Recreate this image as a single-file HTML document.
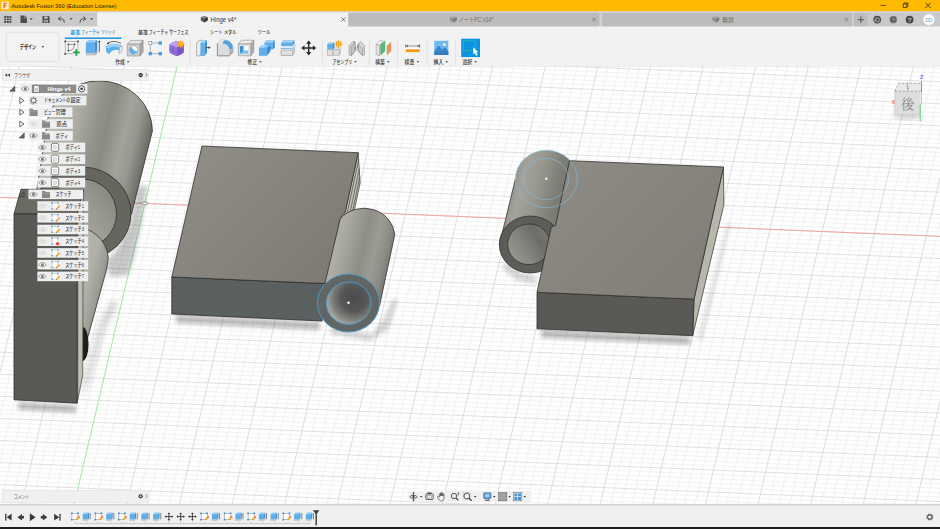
<!DOCTYPE html>
<html lang="ja"><head><meta charset="utf-8"><title>Autodesk Fusion 360 (Education License)</title>
<style>
html,body{margin:0;padding:0;background:#fff;overflow:hidden}
svg{display:block;font-family:"Liberation Sans","Noto Sans CJK JP",sans-serif}
text{font-family:"Liberation Sans","Noto Sans CJK JP",sans-serif}
</style></head><body>
<svg width="940" height="529" viewBox="0 0 940 529">
<defs>
<filter id="blur3" x="-20%" y="-20%" width="140%" height="140%"><feGaussianBlur stdDeviation="3"/></filter>
<filter id="blur2" x="-20%" y="-20%" width="140%" height="140%"><feGaussianBlur stdDeviation="2"/></filter>
<filter id="blur1" x="-20%" y="-20%" width="140%" height="140%"><feGaussianBlur stdDeviation="0.6"/></filter>
<clipPath id="canvasclip"><rect x="0" y="66" width="940" height="438"/></clipPath>
</defs>
<rect x="0" y="0" width="940" height="529" fill="#ffffff"/>
<g id="canvas" clip-path="url(#canvasclip)">
<path d="M-21.2 60L-127.0 510M-10.7 60L-116.5 510M-0.2 60L-105.9 510M10.3 60L-95.4 510M31.4 60L-74.4 510M41.9 60L-63.9 510M52.4 60L-53.3 510M62.9 60L-42.8 510M84.0 60L-21.8 510M94.5 60L-11.3 510M105.0 60L-0.7 510M115.5 60L9.8 510M136.6 60L30.8 510M147.1 60L41.3 510M157.6 60L51.9 510M168.1 60L62.4 510M189.2 60L83.4 510M199.7 60L93.9 510M210.2 60L104.5 510M220.7 60L115.0 510M241.8 60L136.0 510M252.3 60L146.5 510M262.8 60L157.1 510M273.3 60L167.6 510M294.4 60L188.6 510M304.9 60L199.1 510M315.4 60L209.7 510M325.9 60L220.2 510M347.0 60L241.2 510M357.5 60L251.7 510M368.0 60L262.3 510M378.5 60L272.8 510M399.6 60L293.8 510M410.1 60L304.3 510M420.6 60L314.9 510M431.1 60L325.4 510M452.2 60L346.4 510M462.7 60L356.9 510M473.2 60L367.5 510M483.7 60L378.0 510M504.8 60L399.0 510M515.3 60L409.5 510M525.8 60L420.1 510M536.3 60L430.6 510M557.4 60L451.6 510M567.9 60L462.1 510M578.4 60L472.7 510M588.9 60L483.2 510M610.0 60L504.2 510M620.5 60L514.7 510M631.0 60L525.3 510M641.5 60L535.8 510M662.6 60L556.8 510M673.1 60L567.3 510M683.6 60L577.9 510M694.1 60L588.4 510M715.2 60L609.4 510M725.7 60L619.9 510M736.2 60L630.5 510M746.7 60L641.0 510M767.8 60L662.0 510M778.3 60L672.5 510M788.8 60L683.1 510M799.3 60L693.6 510M820.4 60L714.6 510M830.9 60L725.1 510M841.4 60L735.7 510M851.9 60L746.2 510M873.0 60L767.2 510M883.5 60L777.7 510M894.0 60L788.3 510M904.5 60L798.8 510M925.6 60L819.8 510M936.1 60L830.3 510M946.6 60L840.9 510M957.1 60L851.4 510M978.2 60L872.4 510M988.7 60L882.9 510M999.2 60L893.5 510M1009.7 60L904.0 510M1030.8 60L925.0 510M1041.3 60L935.5 510M1051.8 60L946.1 510M1062.3 60L956.6 510M1083.4 60L977.6 510M1093.9 60L988.1 510M1104.4 60L998.7 510M1114.9 60L1009.2 510M1136.0 60L1030.2 510M1146.5 60L1040.7 510M1157.0 60L1051.3 510M1167.5 60L1061.8 510M1188.6 60L1082.8 510M1199.1 60L1093.3 510M1209.6 60L1103.9 510M1220.1 60L1114.4 510" stroke="#eaeaea" stroke-width="0.7" fill="none"/>
<path d="M-5 2.7L945 42.1M-5 7.1L945 46.5M-5 11.5L945 51.0M-5 16.0L945 55.4M-5 24.8L945 64.2M-5 29.2L945 68.6M-5 33.6L945 73.1M-5 38.1L945 77.5M-5 46.9L945 86.3M-5 51.3L945 90.7M-5 55.7L945 95.2M-5 60.2L945 99.6M-5 69.0L945 108.4M-5 73.4L945 112.8M-5 77.8L945 117.3M-5 82.3L945 121.7M-5 91.1L945 130.5M-5 95.5L945 134.9M-5 99.9L945 139.4M-5 104.4L945 143.8M-5 113.2L945 152.6M-5 117.6L945 157.0M-5 122.0L945 161.5M-5 126.5L945 165.9M-5 135.3L945 174.7M-5 139.7L945 179.1M-5 144.1L945 183.6M-5 148.6L945 188.0M-5 157.4L945 196.8M-5 161.8L945 201.2M-5 166.2L945 205.7M-5 170.7L945 210.1M-5 179.5L945 218.9M-5 183.9L945 223.3M-5 188.3L945 227.8M-5 192.8L945 232.2M-5 201.6L945 241.0M-5 206.0L945 245.4M-5 210.4L945 249.9M-5 214.9L945 254.3M-5 223.7L945 263.1M-5 228.1L945 267.5M-5 232.5L945 272.0M-5 237.0L945 276.4M-5 245.8L945 285.2M-5 250.2L945 289.6M-5 254.6L945 294.1M-5 259.1L945 298.5M-5 267.9L945 307.3M-5 272.3L945 311.7M-5 276.7L945 316.2M-5 281.2L945 320.6M-5 290.0L945 329.4M-5 294.4L945 333.8M-5 298.8L945 338.3M-5 303.3L945 342.7M-5 312.1L945 351.5M-5 316.5L945 355.9M-5 320.9L945 360.4M-5 325.4L945 364.8M-5 334.2L945 373.6M-5 338.6L945 378.0M-5 343.0L945 382.5M-5 347.5L945 386.9M-5 356.3L945 395.7M-5 360.7L945 400.1M-5 365.1L945 404.6M-5 369.6L945 409.0M-5 378.4L945 417.8M-5 382.8L945 422.2M-5 387.2L945 426.7M-5 391.7L945 431.1M-5 400.5L945 439.9M-5 404.9L945 444.3M-5 409.3L945 448.8M-5 413.8L945 453.2M-5 422.6L945 462.0M-5 427.0L945 466.4M-5 431.4L945 470.9M-5 435.9L945 475.3M-5 444.7L945 484.1M-5 449.1L945 488.5M-5 453.5L945 493.0M-5 458.0L945 497.4M-5 466.8L945 506.2M-5 471.2L945 510.6M-5 475.6L945 515.1M-5 480.1L945 519.5M-5 488.9L945 528.3M-5 493.3L945 532.7M-5 497.7L945 537.2M-5 502.2L945 541.6M-5 511.0L945 550.4M-5 515.4L945 554.8M-5 519.8L945 559.3M-5 524.3L945 563.7M-5 533.1L945 572.5M-5 537.5L945 576.9M-5 541.9L945 581.4M-5 546.4L945 585.8" stroke="#ededed" stroke-width="0.7" fill="none"/>
<path d="M-31.8 60L-137.5 510M20.8 60L-84.9 510M73.4 60L-32.3 510M126.0 60L20.3 510M178.6 60L72.9 510M231.2 60L125.5 510M283.8 60L178.1 510M336.4 60L230.7 510M389.0 60L283.3 510M441.6 60L335.9 510M494.2 60L388.5 510M546.8 60L441.1 510M599.4 60L493.7 510M652.0 60L546.3 510M704.6 60L598.9 510M757.2 60L651.5 510M809.8 60L704.1 510M862.4 60L756.7 510M915.0 60L809.3 510M967.6 60L861.9 510M1020.2 60L914.5 510M1072.8 60L967.1 510M1125.4 60L1019.7 510M1178.0 60L1072.3 510" stroke="#d4d4d4" stroke-width="0.8" fill="none"/>
<path d="M-5 -1.7L945 37.7M-5 20.4L945 59.8M-5 42.5L945 81.9M-5 64.6L945 104.0M-5 86.7L945 126.1M-5 108.8L945 148.2M-5 130.9L945 170.3M-5 153.0L945 192.4M-5 175.1L945 214.5M-5 197.2L945 236.6M-5 219.3L945 258.7M-5 241.4L945 280.8M-5 263.5L945 302.9M-5 285.6L945 325.0M-5 307.7L945 347.1M-5 329.8L945 369.2M-5 351.9L945 391.3M-5 374.0L945 413.4M-5 396.1L945 435.5M-5 418.2L945 457.6M-5 440.3L945 479.7M-5 462.4L945 501.8M-5 484.5L945 523.9M-5 506.6L945 546.0M-5 528.7L945 568.1" stroke="#d8d8d8" stroke-width="0.8" fill="none"/>
<path d="M-5 197.2L945 236.6" stroke="#f5a3a0" stroke-width="1" fill="none"/>
<path d="M178.6 60L72.9 510" stroke="#a8eca8" stroke-width="0.9" fill="none"/>
<defs>
<linearGradient id="gTopM" gradientUnits="userSpaceOnUse" x1="200" y1="150" x2="340" y2="290">
<stop offset="0" stop-color="#8f8d85"/><stop offset="0.5" stop-color="#85837b"/><stop offset="1" stop-color="#7b7972"/></linearGradient>
<linearGradient id="gTopR" gradientUnits="userSpaceOnUse" x1="560" y1="160" x2="700" y2="300">
<stop offset="0" stop-color="#8d8b83"/><stop offset="0.5" stop-color="#86847c"/><stop offset="1" stop-color="#807e76"/></linearGradient>
<linearGradient id="gCylM" gradientUnits="userSpaceOnUse" x1="328" y1="262" x2="388" y2="276">
<stop offset="0" stop-color="#b2b2aa"/><stop offset="0.22" stop-color="#a5a59d"/><stop offset="0.5" stop-color="#8e8e87"/><stop offset="0.7" stop-color="#9c9c94"/><stop offset="0.88" stop-color="#8b8b84"/><stop offset="1" stop-color="#747470"/></linearGradient>
<linearGradient id="gCylR" gradientUnits="userSpaceOnUse" x1="503" y1="205" x2="565" y2="220">
<stop offset="0" stop-color="#8c8c85"/><stop offset="0.2" stop-color="#a3a39b"/><stop offset="0.45" stop-color="#98988f"/><stop offset="0.75" stop-color="#7e7e77"/><stop offset="1" stop-color="#73736d"/></linearGradient>
<radialGradient id="gHoleM" gradientUnits="userSpaceOnUse" cx="354" cy="298" r="30">
<stop offset="0" stop-color="#4a4c4b"/><stop offset="0.45" stop-color="#565857"/><stop offset="0.72" stop-color="#7c7e7a"/><stop offset="0.9" stop-color="#a2a29c"/><stop offset="1" stop-color="#aeaea8"/></radialGradient>
<linearGradient id="gHoleR" gradientUnits="userSpaceOnUse" x1="511" y1="258" x2="548" y2="234">
<stop offset="0" stop-color="#97978f"/><stop offset="0.4" stop-color="#84847e"/><stop offset="0.75" stop-color="#6c6c68"/><stop offset="1" stop-color="#777772"/></linearGradient>
<linearGradient id="gCylL" gradientUnits="userSpaceOnUse" x1="42" y1="150" x2="141.600" y2="173.400">
<stop offset="0" stop-color="#bebeb6"/><stop offset="0.25" stop-color="#aeaea6"/><stop offset="0.45" stop-color="#94948c"/><stop offset="0.567" stop-color="#8a8a83"/><stop offset="0.66" stop-color="#979790"/><stop offset="0.745" stop-color="#a3a39b"/><stop offset="0.86" stop-color="#97978f"/><stop offset="0.95" stop-color="#7c7c76"/><stop offset="1" stop-color="#6b6b65"/></linearGradient>
<linearGradient id="gCylL2" gradientUnits="userSpaceOnUse" x1="70" y1="280" x2="106" y2="289">
<stop offset="0" stop-color="#b8b8b0"/><stop offset="0.5" stop-color="#b0b0a8"/><stop offset="0.8" stop-color="#9c9c94"/><stop offset="1" stop-color="#7c7c76"/></linearGradient>
<linearGradient id="gHoleL" gradientUnits="userSpaceOnUse" x1="60" y1="230" x2="118" y2="190">
<stop offset="0" stop-color="#b0b0a8"/><stop offset="0.5" stop-color="#9c9c94"/><stop offset="1" stop-color="#84847d"/></linearGradient>
<linearGradient id="gStrip" gradientUnits="userSpaceOnUse" x1="77" y1="0" x2="83.5" y2="0">
<stop offset="0" stop-color="#8a8a82"/><stop offset="0.4" stop-color="#c2c2b7"/><stop offset="1" stop-color="#b0b0a5"/></linearGradient>
</defs>
<!-- shadows -->
<g fill="#000">
<path d="M176 315L320 322L320 330L176 323Z" filter="url(#blur2)" opacity="0.26"/>
<path d="M330 326L372 334L384 318L392 300L398 300L388 330L370 341L330 334Z" filter="url(#blur2)" opacity="0.16"/>
<path d="M541 330L690 337L690 344.5L541 337.5Z" filter="url(#blur2)" opacity="0.28"/>
<path d="M697 338L727 222L731 224L702 342Z" filter="url(#blur2)" opacity="0.10"/>
<path d="M505 262L520 272L536 276L536 284L516 280L502 268Z" filter="url(#blur2)" opacity="0.16"/>
<path d="M18 402L76 405.500L76 413L18 409.500Z" filter="url(#blur2)" opacity="0.26"/>
<path d="M84 378L100 322L112 300L118 304L104 330L90 380L82 400Z" filter="url(#blur3)" opacity="0.16"/>
<path d="M138 186L147 186L141 225L134 257L128 275L110 277L107 262L120 245L130 222Z" filter="url(#blur2)" opacity="0.21"/>
</g>
<!-- ===== middle object ===== -->
<g stroke-linejoin="round">
<!-- right stepped side -->
<path d="M358.2 152.7L360.1 183L351.800 222L343 222Z" fill="#c0c0b6" stroke="#3a3a36" stroke-width="0.7"/>
<path d="M358.700 159.500L345.300 222M359.400 169L348 222M359.900 177L350.300 222" stroke="#4a4a45" stroke-width="0.7" fill="none"/>
<!-- front face -->
<path d="M171.8 277L326 283.600L322 321L171.8 314Z" fill="#5a6060" stroke="#2e2e2b" stroke-width="0.8"/>
<!-- top face -->
<path d="M202 146L358.2 152.7L345.4 211.3L340.3 218.5L326 283.600L171.8 277Z" fill="url(#gTopM)" stroke="#2e2e2b" stroke-width="0.8"/>
<!-- cylinder body -->
<path d="M340.3 218.5A31 29 0 0 1 394.8 234.4L379.5 306L325 283Z" fill="url(#gCylM)" stroke="#33332f" stroke-width="0.8"/>
<!-- end ring -->
<ellipse cx="348.5" cy="303" rx="31" ry="29" fill="#616564" stroke="#469dd0" stroke-width="0.9"/>
<ellipse cx="348.7" cy="303.2" rx="22.3" ry="21.2" fill="url(#gHoleM)" stroke="#469dd0" stroke-width="0.9"/>
<circle cx="348.5" cy="302.7" r="1.2" fill="#fff"/>
</g>
<!-- ===== right object ===== -->
<g stroke-linejoin="round">
<!-- cylinder body -->
<path d="M499.6 244A31 29 0 0 0 561 248L577.4 179A31 28.700 0 0 0 515.4 179Z" fill="url(#gCylR)"/><path d="M515.400 179L499.600 244" stroke="#33332f" stroke-width="0.8" fill="none"/>
<!-- end ring -->
<ellipse cx="530.3" cy="244.5" rx="31" ry="28.5" fill="#5c5c58" stroke="#33332f" stroke-width="0.8"/>
<ellipse cx="529" cy="244.3" rx="21.3" ry="20.3" fill="url(#gHoleR)" stroke="#33332f" stroke-width="0.8"/>
<!-- side face -->
<path d="M723.5 167.200L723.800 205L692.7 335.7L694 299.2Z" fill="#b7b7ab" stroke="#33332f" stroke-width="0.7"/>
<!-- front face -->
<path d="M537 292.3L694 299.2L692.7 335.7L537 328.8Z" fill="#5a5955" stroke="#2e2e2b" stroke-width="0.8"/>
<!-- top face -->
<path d="M569.5 160.7L723.5 167L694 299.2L537 292.3L551.300 227L555.500 225.500Z" fill="url(#gTopR)" stroke="#2e2e2b" stroke-width="0.8"/>
<!-- selection circles -->
<ellipse cx="546.4" cy="179" rx="31" ry="28.7" fill="none" stroke="#7cc0e8" stroke-width="0.7" opacity="0.85"/>
<ellipse cx="546" cy="179" rx="22.5" ry="20.6" fill="none" stroke="#7cc0e8" stroke-width="0.7" opacity="0.85"/>
<circle cx="546.3" cy="178.8" r="1.2" fill="#fff" opacity="0.9"/>
</g>
<!-- ===== left object ===== -->
<g stroke-linejoin="round">
<!-- upper cylinder -->
<path d="M46 131A53 50 0 0 1 152.4 131L131.5 214L33 214Z" fill="url(#gCylL)" stroke="#33332f" stroke-width="0.8"/>
<!-- ring -->
<ellipse cx="82" cy="213.5" rx="49" ry="46.5" fill="#66665f" stroke="#2e2e2b" stroke-width="0.8"/>
<ellipse cx="82" cy="213.5" rx="34.5" ry="34.5" fill="url(#gHoleL)" stroke="#2e2e2b" stroke-width="0.8"/>
<!-- lower cylinder -->
<path d="M40 262A34 33 0 0 1 108.3 258L106.7 269L88.3 335.6L83 350L40 350Z" fill="url(#gCylL2)" stroke="#33332f" stroke-width="0.8"/>
<!-- black partial disc -->
<ellipse cx="82.4" cy="344" rx="6.2" ry="17" fill="#1e1e1c"/>
<!-- block side light strip -->
<path d="M77.1 214L83.3 190L82.8 375L77.1 403.2Z" fill="url(#gStrip)" stroke="#33332f" stroke-width="0.6"/>
<!-- block top -->
<path d="M21 189.3L83.3 189.3L77.1 214L14 214Z" fill="#6b6b64" stroke="#2e2e2b" stroke-width="0.8"/>
<!-- block front -->
<path d="M14 214L77.1 214L77.1 403.2L14 399.8Z" fill="#5a5955" stroke="#2e2e2b" stroke-width="0.8"/>
</g>
<!-- origin marker -->
<ellipse cx="144.900" cy="203.400" rx="3.400" ry="1.700" fill="#d6d6d6" stroke="#808080" stroke-width="0.700"/>
<ellipse cx="144.900" cy="203.400" rx="1.300" ry="0.600" fill="#fff"/>

</g>
<g id="browser">
<rect x="2.4" y="69.600" width="146.4" height="11" fill="#f0f0f0" stroke="#dcdcdc" stroke-width="0.5"/>
<path d="M7.2 73.500v3.2l-2.3-1.6zM10 73.500v3.2l-2.3-1.6z" fill="#333"/>
<text x="14" y="77.100" font-size="5.100" fill="#444" textLength="16" lengthAdjust="spacingAndGlyphs">ブラウザ</text>
<circle cx="140.7" cy="75.100" r="2.1" fill="#2a2a2a"/><rect x="139.5" y="74.750" width="2.4" height="0.7" fill="#f0f0f0"/>
<path d="M145.9 72.800l1.6 2.3-1.6 2.3z" fill="#bbb" stroke="#999" stroke-width="0.3"/>
<rect x="20" y="84.0" width="67.4" height="9.6" fill="#efefef"/>
<path d="M14.799999999999999 86.2v5h-5z" fill="#666" stroke="#333" stroke-width="0.6" stroke-linejoin="round"/>
<path d="M21.400000000000002 88.8Q25.3 84.5 29.2 88.8Q25.3 93.1 21.400000000000002 88.8Z" fill="#fafafa" stroke="#7a7a7a" stroke-width="0.7"/><circle cx="25.3" cy="88.8" r="1.5" fill="#7a7a7a"/>
<rect x="31.8" y="84.6" width="44.4" height="8.4" fill="#8b8b8b"/>
<path d="M33.6 85.39999999999999h4.2l1.6 1.6v5.4h-5.8z" fill="#f4f4f4" stroke="#555" stroke-width="0.6"/><rect x="35.2" y="88.2" width="2.8" height="2.8" fill="#d8d8d8" stroke="#aaa" stroke-width="0.3"/>
<text x="47.6" y="90.7" font-size="5.3" fill="#ffffff" font-weight="bold" textLength="23" lengthAdjust="spacingAndGlyphs">Hinge v4</text>
<circle cx="81.6" cy="88.8" r="3.1" fill="#fdfdfd" stroke="#2a2a2a" stroke-width="0.8"/><circle cx="81.6" cy="88.8" r="1.3" fill="#2a2a2a"/>
<rect x="28.4" y="95.725" width="58" height="9.6" fill="#efefef"/>
<path d="M19.8 97.62499999999999l4.2 2.9-4.2 2.9z" fill="#f6f6f6" stroke="#333" stroke-width="0.7" stroke-linejoin="round"/>
<path d="M35.70 100.52L37.50 100.52M35.06 102.08L36.33 103.35M33.50 102.72L33.50 104.52M31.94 102.08L30.67 103.35M31.30 100.52L29.50 100.52M31.94 98.97L30.67 97.70M33.50 98.32L33.50 96.52M35.06 98.97L36.33 97.70" stroke="#868686" stroke-width="1.200"/><circle cx="33.5" cy="100.52499999999999" r="2.3" fill="none" stroke="#868686" stroke-width="1.200"/>
<text x="44.2" y="102.425" font-size="5.3" fill="#333" font-weight="500" textLength="25.8" lengthAdjust="spacingAndGlyphs">ドキュメントの</text>
<text x="70.4" y="102.425" font-size="5.3" fill="#333" font-weight="500" textLength="10.2" lengthAdjust="spacingAndGlyphs">設定</text>
<rect x="28.4" y="107.45" width="44" height="9.6" fill="#efefef"/>
<path d="M19.8 109.35l4.2 2.9-4.2 2.9z" fill="#f6f6f6" stroke="#333" stroke-width="0.7" stroke-linejoin="round"/>
<path d="M29.6 108.85h3l0.9 1.1h4.1v6h-8z" fill="#898989"/><path d="M29.6 111.05h8" stroke="#b0b0b0" stroke-width="0.5"/>
<text x="44.2" y="114.15" font-size="5.3" fill="#333" font-weight="500" textLength="10.8" lengthAdjust="spacingAndGlyphs">ビュー</text>
<text x="55.4" y="114.15" font-size="5.3" fill="#333" font-weight="500" textLength="10.4" lengthAdjust="spacingAndGlyphs">管理</text>
<rect x="28.4" y="119.175" width="44.4" height="9.6" fill="#efefef"/>
<path d="M19.8 121.07499999999999l4.2 2.9-4.2 2.9z" fill="#f6f6f6" stroke="#333" stroke-width="0.7" stroke-linejoin="round"/>
<path d="M29.6 123.975Q33.5 119.675 37.4 123.975Q33.5 128.275 29.6 123.975Z" fill="#ececec" stroke="#d4d4d4" stroke-width="0.7"/><circle cx="33.5" cy="123.975" r="1.5" fill="#d4d4d4"/><path d="M30.9 126.175L35.7 121.375M32.5 126.77499999999999L36.9 122.375M29.9 124.77499999999999L34.1 120.77499999999999" stroke="#e4e4e4" stroke-width="0.7"/>
<path d="M42 120.57499999999999h3l0.9 1.1h4.1v6h-8z" fill="#898989"/><path d="M42 122.77499999999999h8" stroke="#b0b0b0" stroke-width="0.5"/>
<text x="56.4" y="125.875" font-size="5.3" fill="#333" font-weight="500" textLength="10.6" lengthAdjust="spacingAndGlyphs">原点</text>
<rect x="28.4" y="130.9" width="44.4" height="9.6" fill="#efefef"/>
<path d="M24.200000000000003 133.10000000000002v5h-5z" fill="#666" stroke="#333" stroke-width="0.6" stroke-linejoin="round"/>
<path d="M29.6 135.70000000000002Q33.5 131.4 37.4 135.70000000000002Q33.5 140.00000000000003 29.6 135.70000000000002Z" fill="#fafafa" stroke="#7a7a7a" stroke-width="0.7"/><circle cx="33.5" cy="135.70000000000002" r="1.5" fill="#7a7a7a"/>
<path d="M42 132.3h3l0.9 1.1h4.1v6h-8z" fill="#898989"/><path d="M42 134.50000000000003h8" stroke="#b0b0b0" stroke-width="0.5"/>
<text x="55.6" y="137.60000000000002" font-size="5.3" fill="#333" font-weight="500" textLength="12.6" lengthAdjust="spacingAndGlyphs">ボディ</text>
<rect x="37.4" y="142.625" width="47.8" height="9.6" fill="#efefef"/>
<path d="M38.5 147.425Q42.4 143.125 46.3 147.425Q42.4 151.72500000000002 38.5 147.425Z" fill="#fafafa" stroke="#7a7a7a" stroke-width="0.7"/><circle cx="42.4" cy="147.425" r="1.5" fill="#7a7a7a"/>
<rect x="51.3" y="143.425" width="7.4" height="8" rx="1.6" fill="#fbfbfb" stroke="#555" stroke-width="0.7"/><rect x="53.5" y="145.82500000000002" width="3" height="3.6" fill="#e3e3e3" stroke="#bdbdbd" stroke-width="0.4"/>
<text x="65.6" y="149.32500000000002" font-size="5.3" fill="#333" font-weight="500" textLength="14.6" lengthAdjust="spacingAndGlyphs">ボディ1</text>
<rect x="37.4" y="154.35" width="47.8" height="9.6" fill="#efefef"/>
<path d="M38.5 159.15Q42.4 154.85 46.3 159.15Q42.4 163.45000000000002 38.5 159.15Z" fill="#fafafa" stroke="#7a7a7a" stroke-width="0.7"/><circle cx="42.4" cy="159.15" r="1.5" fill="#7a7a7a"/>
<rect x="51.3" y="155.15" width="7.4" height="8" rx="1.6" fill="#fbfbfb" stroke="#555" stroke-width="0.7"/><rect x="53.5" y="157.55" width="3" height="3.6" fill="#e3e3e3" stroke="#bdbdbd" stroke-width="0.4"/>
<text x="65.6" y="161.05" font-size="5.3" fill="#333" font-weight="500" textLength="14.6" lengthAdjust="spacingAndGlyphs">ボディ2</text>
<rect x="37.4" y="166.075" width="47.8" height="9.6" fill="#efefef"/>
<path d="M38.5 170.875Q42.4 166.575 46.3 170.875Q42.4 175.175 38.5 170.875Z" fill="#fafafa" stroke="#7a7a7a" stroke-width="0.7"/><circle cx="42.4" cy="170.875" r="1.5" fill="#7a7a7a"/>
<rect x="51.3" y="166.875" width="7.4" height="8" rx="1.6" fill="#fbfbfb" stroke="#555" stroke-width="0.7"/><rect x="53.5" y="169.275" width="3" height="3.6" fill="#e3e3e3" stroke="#bdbdbd" stroke-width="0.4"/>
<text x="65.6" y="172.775" font-size="5.3" fill="#333" font-weight="500" textLength="14.6" lengthAdjust="spacingAndGlyphs">ボディ3</text>
<rect x="37.4" y="177.8" width="47.8" height="9.6" fill="#efefef"/>
<path d="M38.5 182.60000000000002Q42.4 178.3 46.3 182.60000000000002Q42.4 186.90000000000003 38.5 182.60000000000002Z" fill="#fafafa" stroke="#7a7a7a" stroke-width="0.7"/><circle cx="42.4" cy="182.60000000000002" r="1.5" fill="#7a7a7a"/>
<rect x="51.3" y="178.60000000000002" width="7.4" height="8" rx="1.6" fill="#fbfbfb" stroke="#555" stroke-width="0.7"/><rect x="53.5" y="181.00000000000003" width="3" height="3.6" fill="#e3e3e3" stroke="#bdbdbd" stroke-width="0.4"/>
<text x="65.6" y="184.50000000000003" font-size="5.3" fill="#333" font-weight="500" textLength="14.6" lengthAdjust="spacingAndGlyphs">ボディ4</text>
<rect x="28.4" y="189.52499999999998" width="54.6" height="9.6" fill="#efefef"/>
<path d="M24.0 191.725v5h-5z" fill="#666" stroke="#333" stroke-width="0.6" stroke-linejoin="round"/>
<path d="M29.6 194.325Q33.5 190.02499999999998 37.4 194.325Q33.5 198.625 29.6 194.325Z" fill="#fafafa" stroke="#7a7a7a" stroke-width="0.7"/><circle cx="33.5" cy="194.325" r="1.5" fill="#7a7a7a"/>
<path d="M42 190.92499999999998h3l0.9 1.1h4.1v6h-8z" fill="#898989"/><path d="M42 193.125h8" stroke="#b0b0b0" stroke-width="0.5"/>
<text x="55.6" y="196.225" font-size="5.3" fill="#333" font-weight="500" textLength="16" lengthAdjust="spacingAndGlyphs">スケッチ</text>
<rect x="37.4" y="201.25" width="50.8" height="9.6" fill="#efefef"/>
<path d="M38.5 206.05Q42.4 201.75 46.3 206.05Q42.4 210.35000000000002 38.5 206.05Z" fill="#ececec" stroke="#d4d4d4" stroke-width="0.7"/><circle cx="42.4" cy="206.05" r="1.5" fill="#d4d4d4"/><path d="M39.8 208.25L44.6 203.45000000000002M41.4 208.85000000000002L45.8 204.45000000000002M38.8 206.85000000000002L43.0 202.85000000000002" stroke="#e4e4e4" stroke-width="0.7"/>
<rect x="52.0" y="202.95000000000002" width="5.8" height="6" fill="#fdfdfd"/><path d="M52.0 202.95000000000002v6M52.0 202.95000000000002h5.8" stroke="#8c8c8c" stroke-width="0.6" stroke-dasharray="1 0.6" fill="none"/><path d="M52.0 208.95000000000002h3.4M57.8 202.95000000000002v2.6" stroke="#b4b4b4" stroke-width="0.5" fill="none"/><g fill="#3a9cf0"><rect x="51.4" y="202.25" width="1.3" height="1.3"/><rect x="57.199999999999996" y="202.25" width="1.3" height="1.3"/><rect x="51.4" y="208.25" width="1.3" height="1.3"/></g><path d="M55.9 209.65l0.4-1.5 2-2 1.1 1.100-2 2z" fill="#f5a623"/><path d="M58.3 206.15l0.600-0.600 1.100 1.100-0.600 0.600z" fill="#ee5a4e"/><path d="M55.9 209.65l0.300-1.100 0.800 0.800z" fill="#555"/>
<text x="65.2" y="207.95000000000002" font-size="5.3" fill="#333" font-weight="500" textLength="18.8" lengthAdjust="spacingAndGlyphs">スケッチ1</text>
<rect x="37.4" y="212.975" width="50.8" height="9.6" fill="#efefef"/>
<path d="M38.5 217.775Q42.4 213.475 46.3 217.775Q42.4 222.07500000000002 38.5 217.775Z" fill="#ececec" stroke="#d4d4d4" stroke-width="0.7"/><circle cx="42.4" cy="217.775" r="1.5" fill="#d4d4d4"/><path d="M39.8 219.975L44.6 215.175M41.4 220.57500000000002L45.8 216.175M38.8 218.57500000000002L43.0 214.57500000000002" stroke="#e4e4e4" stroke-width="0.7"/>
<rect x="52.0" y="214.675" width="5.8" height="6" fill="#fdfdfd"/><path d="M52.0 214.675v6M52.0 214.675h5.8" stroke="#8c8c8c" stroke-width="0.6" stroke-dasharray="1 0.6" fill="none"/><path d="M52.0 220.675h3.4M57.8 214.675v2.6" stroke="#b4b4b4" stroke-width="0.5" fill="none"/><g fill="#3a9cf0"><rect x="51.4" y="213.975" width="1.3" height="1.3"/><rect x="57.199999999999996" y="213.975" width="1.3" height="1.3"/><rect x="51.4" y="219.975" width="1.3" height="1.3"/></g><path d="M55.9 221.375l0.4-1.5 2-2 1.1 1.100-2 2z" fill="#f5a623"/><path d="M58.3 217.875l0.600-0.600 1.100 1.100-0.600 0.600z" fill="#ee5a4e"/><path d="M55.9 221.375l0.300-1.100 0.800 0.800z" fill="#555"/>
<text x="65.2" y="219.675" font-size="5.3" fill="#333" font-weight="500" textLength="18.8" lengthAdjust="spacingAndGlyphs">スケッチ2</text>
<rect x="37.4" y="224.7" width="50.8" height="9.6" fill="#efefef"/>
<path d="M38.5 229.5Q42.4 225.2 46.3 229.5Q42.4 233.8 38.5 229.5Z" fill="#ececec" stroke="#d4d4d4" stroke-width="0.7"/><circle cx="42.4" cy="229.5" r="1.5" fill="#d4d4d4"/><path d="M39.8 231.7L44.6 226.9M41.4 232.3L45.8 227.9M38.8 230.3L43.0 226.3" stroke="#e4e4e4" stroke-width="0.7"/>
<rect x="52.0" y="226.4" width="5.8" height="6" fill="#fdfdfd"/><path d="M52.0 226.4v6M52.0 226.4h5.8" stroke="#8c8c8c" stroke-width="0.6" stroke-dasharray="1 0.6" fill="none"/><path d="M52.0 232.4h3.4M57.8 226.4v2.6" stroke="#b4b4b4" stroke-width="0.5" fill="none"/><g fill="#3a9cf0"><rect x="51.4" y="225.7" width="1.3" height="1.3"/><rect x="57.199999999999996" y="225.7" width="1.3" height="1.3"/><rect x="51.4" y="231.7" width="1.3" height="1.3"/></g><path d="M55.9 233.1l0.4-1.5 2-2 1.1 1.100-2 2z" fill="#f5a623"/><path d="M58.3 229.6l0.600-0.600 1.100 1.100-0.600 0.600z" fill="#ee5a4e"/><path d="M55.9 233.1l0.300-1.100 0.800 0.800z" fill="#555"/>
<text x="65.2" y="231.4" font-size="5.3" fill="#333" font-weight="500" textLength="18.8" lengthAdjust="spacingAndGlyphs">スケッチ3</text>
<rect x="37.4" y="236.42499999999998" width="50.8" height="9.6" fill="#efefef"/>
<path d="M38.5 241.225Q42.4 236.92499999999998 46.3 241.225Q42.4 245.525 38.5 241.225Z" fill="#ececec" stroke="#d4d4d4" stroke-width="0.7"/><circle cx="42.4" cy="241.225" r="1.5" fill="#d4d4d4"/><path d="M39.8 243.42499999999998L44.6 238.625M41.4 244.025L45.8 239.625M38.8 242.025L43.0 238.025" stroke="#e4e4e4" stroke-width="0.7"/>
<rect x="52.0" y="238.125" width="5.8" height="6" fill="#fdfdfd"/><path d="M52.0 238.125v6M52.0 238.125h5.8" stroke="#8c8c8c" stroke-width="0.6" stroke-dasharray="1 0.6" fill="none"/><path d="M52.0 244.125h3.4M57.8 238.125v2.6" stroke="#b4b4b4" stroke-width="0.5" fill="none"/><g fill="#3a9cf0"><rect x="51.4" y="237.42499999999998" width="1.3" height="1.3"/><rect x="57.199999999999996" y="237.42499999999998" width="1.3" height="1.3"/><rect x="51.4" y="243.42499999999998" width="1.3" height="1.3"/></g><circle cx="57.599999999999994" cy="243.625" r="1.7" fill="#e8463c"/>
<text x="65.2" y="243.125" font-size="5.3" fill="#333" font-weight="500" textLength="18.8" lengthAdjust="spacingAndGlyphs">スケッチ4</text>
<rect x="37.4" y="248.15" width="50.8" height="9.6" fill="#efefef"/>
<path d="M38.5 252.95000000000002Q42.4 248.65 46.3 252.95000000000002Q42.4 257.25 38.5 252.95000000000002Z" fill="#ececec" stroke="#d4d4d4" stroke-width="0.7"/><circle cx="42.4" cy="252.95000000000002" r="1.5" fill="#d4d4d4"/><path d="M39.8 255.15L44.6 250.35000000000002M41.4 255.75000000000003L45.8 251.35000000000002M38.8 253.75000000000003L43.0 249.75000000000003" stroke="#e4e4e4" stroke-width="0.7"/>
<rect x="52.0" y="249.85000000000002" width="5.8" height="6" fill="#fdfdfd"/><path d="M52.0 249.85000000000002v6M52.0 249.85000000000002h5.8" stroke="#8c8c8c" stroke-width="0.6" stroke-dasharray="1 0.6" fill="none"/><path d="M52.0 255.85000000000002h3.4M57.8 249.85000000000002v2.6" stroke="#b4b4b4" stroke-width="0.5" fill="none"/><g fill="#3a9cf0"><rect x="51.4" y="249.15" width="1.3" height="1.3"/><rect x="57.199999999999996" y="249.15" width="1.3" height="1.3"/><rect x="51.4" y="255.15" width="1.3" height="1.3"/></g><path d="M55.9 256.55l0.4-1.5 2-2 1.1 1.100-2 2z" fill="#f5a623"/><path d="M58.3 253.05l0.600-0.600 1.100 1.100-0.600 0.600z" fill="#ee5a4e"/><path d="M55.9 256.55l0.300-1.100 0.800 0.800z" fill="#555"/>
<text x="65.2" y="254.85000000000002" font-size="5.3" fill="#333" font-weight="500" textLength="18.8" lengthAdjust="spacingAndGlyphs">スケッチ5</text>
<rect x="37.4" y="259.875" width="50.8" height="9.6" fill="#efefef"/>
<path d="M38.5 264.675Q42.4 260.375 46.3 264.675Q42.4 268.975 38.5 264.675Z" fill="#fafafa" stroke="#7a7a7a" stroke-width="0.7"/><circle cx="42.4" cy="264.675" r="1.5" fill="#7a7a7a"/>
<rect x="52.0" y="261.575" width="5.8" height="6" fill="#fdfdfd"/><path d="M52.0 261.575v6M52.0 261.575h5.8" stroke="#8c8c8c" stroke-width="0.6" stroke-dasharray="1 0.6" fill="none"/><path d="M52.0 267.575h3.4M57.8 261.575v2.6" stroke="#b4b4b4" stroke-width="0.5" fill="none"/><g fill="#3a9cf0"><rect x="51.4" y="260.875" width="1.3" height="1.3"/><rect x="57.199999999999996" y="260.875" width="1.3" height="1.3"/><rect x="51.4" y="266.875" width="1.3" height="1.3"/></g><path d="M55.9 268.27500000000003l0.4-1.5 2-2 1.1 1.100-2 2z" fill="#f5a623"/><path d="M58.3 264.77500000000003l0.600-0.600 1.100 1.100-0.600 0.600z" fill="#ee5a4e"/><path d="M55.9 268.27500000000003l0.300-1.100 0.800 0.800z" fill="#555"/>
<text x="65.2" y="266.575" font-size="5.3" fill="#333" font-weight="500" textLength="18.8" lengthAdjust="spacingAndGlyphs">スケッチ6</text>
<rect x="37.4" y="271.6" width="50.8" height="9.6" fill="#efefef"/>
<path d="M38.5 276.40000000000003Q42.4 272.1 46.3 276.40000000000003Q42.4 280.70000000000005 38.5 276.40000000000003Z" fill="#fafafa" stroke="#7a7a7a" stroke-width="0.7"/><circle cx="42.4" cy="276.40000000000003" r="1.5" fill="#7a7a7a"/>
<rect x="52.0" y="273.3" width="5.8" height="6" fill="#fdfdfd"/><path d="M52.0 273.3v6M52.0 273.3h5.8" stroke="#8c8c8c" stroke-width="0.6" stroke-dasharray="1 0.6" fill="none"/><path d="M52.0 279.3h3.4M57.8 273.3v2.6" stroke="#b4b4b4" stroke-width="0.5" fill="none"/><g fill="#3a9cf0"><rect x="51.4" y="272.6" width="1.3" height="1.3"/><rect x="57.199999999999996" y="272.6" width="1.3" height="1.3"/><rect x="51.4" y="278.6" width="1.3" height="1.3"/></g><path d="M55.9 280.00000000000006l0.4-1.5 2-2 1.1 1.100-2 2z" fill="#f5a623"/><path d="M58.3 276.50000000000006l0.600-0.600 1.100 1.100-0.600 0.600z" fill="#ee5a4e"/><path d="M55.9 280.00000000000006l0.300-1.100 0.800 0.800z" fill="#555"/>
<text x="65.2" y="278.3" font-size="5.3" fill="#333" font-weight="500" textLength="18.8" lengthAdjust="spacingAndGlyphs">スケッチ7</text>
</g>
<g id="viewcube">
<ellipse cx="908" cy="116.5" rx="15" ry="3.2" fill="#000" opacity="0.16" filter="url(#blur2)"/>
<path d="M894.7 91.3L898.7 83.3H920.6V91.3Z" fill="#e8e8e8" opacity="0.92"/>
<rect x="894.7" y="91.3" width="25.9" height="23.2" fill="#dcdcdc" opacity="0.94"/>
<path d="M894.7 91.3H920.6M894.7 91.3L898.7 83.3H920.6M907.6 83.3V91.3" stroke="#8c8c8c" stroke-width="0.7" stroke-dasharray="2.6 1.4" fill="none"/>
<path d="M894.7 91.3V114.5H920.6" stroke="#c4c4c4" stroke-width="0.6" fill="none"/>
<text x="907.8" y="109.4" font-size="13.400" fill="#858585" text-anchor="middle" style="font-family:'Liberation Serif','Noto Serif CJK JP','Noto Serif CJK SC',serif">後</text>
<text x="907.6" y="89.6" font-size="4.600" fill="#9a9a9a" text-anchor="middle" transform="translate(0 0)">下</text>
<path d="M921.5 81V104.5" stroke="#8d66ee" stroke-width="0.9"/>
<path d="M921.5 92V104.5" stroke="#c9c6f4" stroke-width="0.9"/>
<path d="M920.2 104.3V121.5" stroke="#5fd068" stroke-width="1"/>
<text x="921.8" y="79.4" font-size="5.6" font-weight="bold" fill="#7a55ea" text-anchor="middle">Z</text>
<text x="893.4" y="104.2" font-size="5" font-weight="bold" fill="#ee6a5e" text-anchor="middle">X</text>
</g>

<g id="topbars">
<!-- title bar -->
<rect x="0" y="0" width="940" height="11.7" fill="#ffb900"/>
<rect x="0" y="11.300" width="940" height="1.400" fill="#ccd2e2"/>
<rect x="1.3" y="1.6" width="7.4" height="7.6" fill="#fbe9dc"/>
<path d="M3.4 2.8H6.9V4.1H4.9V5.1H6.5V6.3H4.9V8.2H3.4Z" fill="#e8781a"/>
<text x="11.3" y="8.1" font-size="6.1" fill="#1c1a10" textLength="105" lengthAdjust="spacingAndGlyphs">Autodesk Fusion 360 (Education License)</text>
<!-- window controls -->
<path d="M880.6 5.4H886" stroke="#222" stroke-width="0.7" fill="none"/>
<rect x="903.2" y="4" width="3.6" height="3.4" fill="none" stroke="#222" stroke-width="0.7"/>
<path d="M904.2 4V3H907.9V6.4H906.8" stroke="#222" stroke-width="0.7" fill="none"/>
<path d="M925.6 2.9L930.6 7.9M930.6 2.9L925.6 7.9" stroke="#222" stroke-width="0.8" fill="none"/>
<!-- tab bar -->
<rect x="0" y="12.4" width="940" height="14.3" fill="#c9c9c9"/>
<rect x="97.2" y="12.4" width="251" height="14.3" fill="#f2f2f2"/>
<rect x="348.4" y="13" width="251.200" height="13.700" rx="1.2" fill="#bcbcbc"/>
<rect x="599.6" y="13" width="2.4" height="13.700" fill="#d2d2d2"/>
<rect x="602" y="13" width="249.800" height="13.700" rx="1.2" fill="#bcbcbc"/>
<rect x="851.800" y="13" width="2.2" height="13.700" fill="#cdcdcd"/>
<rect x="854" y="13" width="13.400" height="13.700" rx="1" fill="#bdbdbd"/>
<!-- quick access icons -->
<g fill="#4c4c4c">
<rect x="4.2" y="16" width="2" height="1.9"/><rect x="6.8" y="16" width="2" height="1.9"/><rect x="9.4" y="16" width="2" height="1.9"/>
<rect x="4.2" y="18.5" width="2" height="1.9"/><rect x="6.8" y="18.5" width="2" height="1.9"/><rect x="9.4" y="18.5" width="2" height="1.9"/>
<rect x="4.2" y="21" width="2" height="1.9"/><rect x="6.8" y="21" width="2" height="1.9"/><rect x="9.4" y="21" width="2" height="1.9"/>
<path d="M20.5 15.4h4.2l2.2 2.2v5.4h-6.4z"/>
<path d="M29.6 18.2h3.2l-1.6 1.9z"/>
<path d="M42.5 15.9h6.2l0.9 0.9v6.1h-7.1z"/>
</g>
<rect x="44.2" y="16.5" width="3.4" height="2.2" fill="#c9c9c9"/><rect x="43.9" y="20.2" width="4.2" height="2.2" fill="#c9c9c9"/><rect x="44.7" y="20.9" width="2.6" height="0.8" fill="#4c4c4c"/>
<path d="M24.4 15.6v2.3h2.3" fill="none" stroke="#c9c9c9" stroke-width="0.5"/>
<g fill="none" stroke="#555" stroke-width="1" stroke-linecap="round" stroke-linejoin="round">
<path d="M60.6 16.7L58.3 18.8L60.8 20.6M58.6 18.8H62.2Q64.4 19 64.3 22.4"/>
<path d="M83.600 16.7L85.900 18.8L83.400 20.6M85.600 18.8H82.200Q79.800 19 80 22.4"/>
</g>
<path d="M69.500 18.2h3.2l-1.6 1.9zM90 18.2h3.2l-1.6 1.9z" fill="#4c4c4c"/>
<!-- active tab content -->
<path d="M200.8 17.2l3.6-1.3 3.3 1.3v3.4l-3.4 1.8-3.5-1.8z" fill="#5a5a5a"/>
<path d="M200.8 17.2l3.5 1.4 3.4-1.4-3.3-1.3z" fill="#8d8d8d"/>
<path d="M204.3 18.6v3.8l3.4-1.8v-3.4z" fill="#3f3f3f"/>
<text x="210.6" y="22.1" font-size="6.3" fill="#333" textLength="25.6" lengthAdjust="spacingAndGlyphs">Hinge v4*</text>
<path d="M341.3 17.4L345.3 21.6M345.3 17.4L341.3 21.6" stroke="#444" stroke-width="0.7" fill="none"/>
<!-- tab 2 -->
<path d="M449.8 17.2l3.6-1.3 3.3 1.3v3.4l-3.4 1.8-3.5-1.8z" fill="#909090"/>
<path d="M449.8 17.2l3.5 1.4 3.4-1.4-3.3-1.3z" fill="#b0b0b0"/>
<path d="M453.3 18.6v3.8l3.4-1.8v-3.4z" fill="#7c7c7c"/>
<text x="458.6" y="22.1" font-size="6.3" fill="#6c6c6c" textLength="34.6" lengthAdjust="spacingAndGlyphs">ノートPC v14*</text>
<path d="M592.3 17.6L596.1 21.6M596.1 17.6L592.3 21.6" stroke="#6c6c6c" stroke-width="0.7" fill="none"/>
<!-- tab 3 -->
<path d="M712.3 17.2l3.6-1.3 3.3 1.3v3.4l-3.4 1.8-3.5-1.8z" fill="#909090"/>
<path d="M712.3 17.2l3.5 1.4 3.4-1.4-3.3-1.3z" fill="#b0b0b0"/>
<path d="M715.8 18.6v3.8l3.4-1.8v-3.4z" fill="#7c7c7c"/>
<text x="722.3" y="22.2" font-size="5.8" fill="#6c6c6c" textLength="11.6" lengthAdjust="spacingAndGlyphs">無題</text>
<path d="M844.5 17.6L848.3 21.6M848.3 17.6L844.5 21.6" stroke="#6c6c6c" stroke-width="0.7" fill="none"/>
<!-- plus -->
<path d="M857.700 19.700h6.400M860.900 16.500v6.400" stroke="#555" stroke-width="1.1" fill="none"/>
<!-- right icons -->
<circle cx="877.200" cy="19.600" r="3.900" fill="#484848"/>
<path d="M875.300 20.600a2.100 2.100 0 1 1 1.200 1.300M874.700 22l0.500-1.800 1.700 0.700" stroke="#c9c9c9" stroke-width="0.8" fill="none"/>
<circle cx="893.300" cy="19.600" r="3.900" fill="#8a8a8a"/><circle cx="893.300" cy="19.600" r="3" fill="#5e5e5e"/>
<path d="M893.300 17.600v2.100h1.800" stroke="#c9c9c9" stroke-width="0.7" fill="none"/>
<circle cx="909.600" cy="19.600" r="3.900" fill="#484848"/>
<text x="909.600" y="21.900" font-size="6.200" font-weight="bold" fill="#d6d6d6" text-anchor="middle">?</text>
<circle cx="928.900" cy="19.600" r="5.600" fill="#fdfdfd"/>
<text x="928.900" y="21.500" font-size="5" fill="#7f93a8" text-anchor="middle">DD</text>
<!-- toolbar -->
<rect x="0" y="26.6" width="940" height="39.500" fill="#f2f2f2"/>
<rect x="0" y="66" width="940" height="0.600" fill="#e4e4e4"/>
<rect x="6.3" y="32.3" width="52.6" height="29.2" rx="2.5" fill="#f3f3f3" stroke="#dadada" stroke-width="0.7"/>
<text x="19.8" y="48.6" font-size="5.6" font-weight="bold" fill="#2a2a2a" textLength="16.4" lengthAdjust="spacingAndGlyphs">デザイン</text>
<path d="M41.5 46.2h2.7l-1.35 1.6z" fill="#2a2a2a"/>
<!-- ribbon tabs -->
<text x="70.2" y="34.2" font-size="5.1" font-weight="500" fill="#1a8fd8">基準</text><text x="81" y="34.2" font-size="5.3" font-weight="500" fill="#1a8fd8" textLength="34.6" lengthAdjust="spacingAndGlyphs">フィーチャ ソリッド</text>
<rect x="64.8" y="37.5" width="56.6" height="1.4" fill="#0d8ede"/>
<text x="138" y="34.2" font-size="5.1" font-weight="500" fill="#3a3a3a">基準</text><text x="148.800" y="34.2" font-size="5.3" font-weight="500" fill="#3a3a3a" textLength="39.6" lengthAdjust="spacingAndGlyphs">フィーチャ サーフェス</text>
<text x="210" y="34.2" font-size="5.3" font-weight="500" fill="#3a3a3a" textLength="26.6" lengthAdjust="spacingAndGlyphs">シート メタル</text>
<text x="257.8" y="34.2" font-size="5.3" font-weight="500" fill="#3a3a3a" textLength="12.8" lengthAdjust="spacingAndGlyphs">ツール</text>
<!-- separators -->
<g stroke="#dcdcdc" stroke-width="0.8">
<path d="M190.2 40v24.5M322.3 40v24.5M369.3 40v24.5M397.4 40v24.5M427.1 40v24.5M455.6 40v24.5"/>
</g>
<!-- group labels -->
<g font-size="5.2" font-weight="500" fill="#333">
<text x="115.2" y="63.8" textLength="9.6" lengthAdjust="spacingAndGlyphs">作成</text>
<text x="247.6" y="63.8" textLength="9.6" lengthAdjust="spacingAndGlyphs">修正</text>
<text x="332.6" y="63.8" textLength="19.6" lengthAdjust="spacingAndGlyphs">アセンブリ</text>
<text x="375.2" y="63.8" textLength="9.6" lengthAdjust="spacingAndGlyphs">構築</text>
<text x="404.6" y="63.8" textLength="9.6" lengthAdjust="spacingAndGlyphs">検査</text>
<text x="433.6" y="63.8" textLength="9.6" lengthAdjust="spacingAndGlyphs">挿入</text>
<text x="462.4" y="63.8" textLength="9.6" lengthAdjust="spacingAndGlyphs">選択</text>
</g>
<path d="M126.8 61.2h2.6l-1.3 1.6zM259.2 61.2h2.6l-1.3 1.6zM354.2 61.2h2.6l-1.3 1.6zM387 61.2h2.6l-1.3 1.6zM416.6 61.2h2.6l-1.3 1.6zM445.4 61.2h2.6l-1.3 1.6zM474.3 61.2h2.6l-1.3 1.6z" fill="#333"/>
<g id="icons">
<!-- 1 create sketch -->
<rect x="65.3" y="41.5" width="12.6" height="12.2" fill="#f6f6f6" stroke="#a6a6a6" stroke-width="0.8"/>
<g fill="#555"><rect x="64.3" y="40.5" width="1.8" height="1.8"/><rect x="77.2" y="40.5" width="1.8" height="1.8"/><rect x="64.3" y="53" width="1.8" height="1.8"/></g>
<path d="M68.3 44.3H74.6Q74.2 50.4 68.3 50.8Z" fill="#f2f2f2" stroke="#6a6a6a" stroke-width="0.7"/>
<g fill="#444"><rect x="67.6" y="43.6" width="1.4" height="1.4"/><rect x="73.9" y="43.6" width="1.4" height="1.4"/><rect x="67.6" y="50.1" width="1.4" height="1.4"/></g>
<path d="M76.4 48.6v7.4M72.7 52.3h7.4" stroke="#f2f2f2" stroke-width="3.2"/>
<path d="M76.4 49v6.8M73 52.4h6.8" stroke="#1fa53c" stroke-width="1.9"/>
<!-- 2 extrude -->
<path d="M85.8 42.2l2.6-2.2h8.8l-2.4 2.2z" fill="#9ad0f5"/>
<path d="M85.8 42.2h9v10.9h-9z" fill="#5fb0ea"/>
<path d="M94.8 42.2l2.4-2.2v10.9l-2.4 2.2z" fill="#3d8fd4"/>
<path d="M85.8 53.1h9l2.4-2.2v2.3l-2.4 2.2h-9z" fill="#c4c4c4"/>
<path d="M94.8 53.1l2.4-2.2v2.3l-2.4 2.2z" fill="#a3a3a3"/>
<path d="M99.3 41.6v10.6" stroke="#444" stroke-width="0.8"/><circle cx="99.3" cy="41.6" r="0.9" fill="#333"/>
<!-- 3 revolve -->
<path d="M107.6 43.2Q114 39.6 121 43.4" stroke="#444" stroke-width="0.8" fill="none"/><path d="M106.6 43.9l2.2-1.9 0.4 2.2z" fill="#333"/>
<path d="M106 46.2Q113.6 41.4 121.6 45.6V51Q113.8 47.6 108.8 54.2L106 51.6Z" fill="#5fb0ea"/>
<path d="M106 46.2Q113.6 41.4 121.6 45.6L119.4 47.6Q113.6 45 108.6 48.4Z" fill="#9ad0f5"/>
<path d="M119.4 47.6L121.8 45.6Q122.8 48.6 121.4 51.8L119 53.6Z" fill="#f4f4f4" stroke="#8a8a8a" stroke-width="0.6"/>
<!-- 4 hole -->
<path d="M127.3 44.2l3.4-3.8h12.4l-3 3.8z" fill="#e6e6e6" stroke="#8c8c8c" stroke-width="0.6"/>
<path d="M140.1 44.2l3-3.8v11.6l-3 4z" fill="#a8a8a8" stroke="#8c8c8c" stroke-width="0.6"/>
<path d="M127.3 44.2h12.8v11.8h-12.8z" fill="#cfcfcf" stroke="#8c8c8c" stroke-width="0.6"/>
<circle cx="133.6" cy="50" r="4.3" fill="#f6f6f6" stroke="#9a9a9a" stroke-width="0.6"/>
<path d="M131.2 46.5A4.2 4.2 0 1 0 137.4 51.6Q134.8 51.4 133.4 49.8Q132 48.4 131.2 46.5Z" fill="#5fb0ea"/>
<!-- 5 pattern -->
<path d="M150.3 44.6v7.6M152 43h7M152 53.6h7" stroke="#b4b4b4" stroke-width="1"/>
<rect x="148.8" y="41.5" width="3" height="3" fill="#fff" stroke="#777" stroke-width="0.6"/>
<rect x="158.6" y="41.4" width="3.3" height="3.3" fill="#3f9be4"/>
<rect x="148.6" y="52" width="3.3" height="3.3" fill="#3f9be4"/>
<rect x="158.6" y="52" width="3.3" height="3.3" fill="#3f9be4"/>
<!-- 6 form -->
<path d="M169.2 45.4Q169.4 43.6 171.4 43L175.4 41.2Q177 40.8 178.4 41.4L182.6 43.4Q183.8 44 183.8 45.6V51.2Q183.8 52.8 182.4 53.6L178.2 55.8Q176.6 56.4 175.2 55.8L170.6 53.4Q169.2 52.6 169.2 51Z" fill="#9470d8"/>
<path d="M169.4 44.8Q170 43.6 171.4 43L175.4 41.2Q177 40.8 178.4 41.4L183 43.8L177 47.2Z" fill="#b8a0ec"/>
<path d="M177 47.2L183.6 44.2Q183.8 44.8 183.8 45.6V51.2Q183.8 52.8 182.4 53.6L177 56.2Z" fill="#7f5ac9"/>
<path d="M173 45.6v8.8M169.4 49.4l7.4 3.2M177 51.6l6.6-3M180.4 45.8v9" stroke="#6a42ad" stroke-width="0.5" fill="none" opacity="0.8"/>
<path d="M180.8 39.6l0.9 2.3 2.3-1-1 2.3 2.3 0.9-2.3 0.9 1 2.3-2.3-1-0.9 2.3-0.9-2.3-2.3 1 1-2.3-2.3-0.9 2.3-0.9-1-2.3 2.3 1z" fill="#f9a01b"/>
<circle cx="180.8" cy="44.1" r="2" fill="#fbb533"/>
<!-- 7 press pull -->
<path d="M196.6 43.4l2.4-3.2h3v12.6l-2.4 3.2h-3z" fill="#ececec" stroke="#8a8a8a" stroke-width="0.6"/>
<path d="M200.4 43l2.6-3h4l-2.4 3z" fill="#9ad0f5"/>
<path d="M200.4 43h4.2v13h-4.2z" fill="#5fb0ea"/>
<path d="M204.6 43l2.4-3v12.8l-2.4 3.2z" fill="#3d8fd4"/>
<path d="M206 47.6h3.2" stroke="#333" stroke-width="0.8"/><path d="M208.6 46.3l2 1.3-2 1.3z" fill="#333"/>
<!-- 8 fillet -->
<path d="M217.4 43.6l3.2-3.4h5.4Q232.6 41.6 233 48.4v3.8l-3.6 3.6h-12z" fill="#dcdcdc" stroke="#8a8a8a" stroke-width="0.6"/>
<path d="M220.6 40.2h5.4Q232.6 41.6 233 48.4L229.4 49.6Q229 44.6 223.6 43.6L217.4 43.6Z" fill="#ececec"/>
<path d="M224.6 40.2H226Q232.6 41.6 233 48.4L229.4 49.6Q229 44.8 223.4 43.6L222 43.2Z" fill="#4aa3e6"/>
<path d="M229.4 49.6L233 48.4v3.8l-3.6 3.6z" fill="#b4b4b4"/>
<path d="M217.4 43.6v12.2h12l3.6-3.6" fill="none" stroke="#8a8a8a" stroke-width="0.6"/>
<!-- 9 shell -->
<path d="M238.4 44l3.2-3.8h12.2l-3 3.8z" fill="#ececec" stroke="#8a8a8a" stroke-width="0.6"/>
<path d="M250.8 44l3-3.8v11.8l-3 3.8z" fill="#b0b0b0" stroke="#8a8a8a" stroke-width="0.6"/>
<path d="M238.4 44h12.4v11.8h-12.4z" fill="#dedede" stroke="#8a8a8a" stroke-width="0.6"/>
<rect x="240" y="46" width="8.2" height="7.8" fill="#fafafa"/>
<path d="M240 46h3.4v4.6h4.8v3.2h-8.2z" fill="#7cc0f2"/>
<path d="M240 46h3.4v4.6l-3.4 3.2z" fill="#3d8fd4"/>
<!-- 10 combine -->
<path d="M264.4 42.4l2.2-2.4h8.2l-2 2.4z" fill="#9ad0f5"/>
<path d="M264.4 42.4h8.4v7.2h-8.4z" fill="#5fb0ea"/>
<path d="M272.8 42.4l2-2.4v7.2l-2 2.4z" fill="#3d8fd4"/>
<path d="M259 47.6l2-2.4h7.8l-2 2.4z" fill="#9ad0f5"/>
<path d="M259 47.6h8v8.2h-8z" fill="#5fb0ea"/>
<path d="M267 47.6l2-2.4v1h1.6v4.6l-1.6 2.4h-0.2l-1.8 2.6z" fill="#3d8fd4"/>
<!-- 11 offset face -->
<path d="M281.2 42.4l2.2-2.4h11l-1.8 2.4z" fill="#9ad0f5"/>
<path d="M281.2 42.4h11.4v3.8h-11.4z" fill="#5fb0ea"/>
<path d="M292.6 42.4l1.8-2.4v3.8l-1.8 2.4z" fill="#3d8fd4"/>
<path d="M280.4 48.4h12.4l2.6-3" stroke="#6fb8ee" stroke-width="1" fill="none"/>
<path d="M281.2 50.2h11.4l1.8-2.4v5l-1.8 2.6h-11.4z" fill="#cdcdcd" stroke="#9a9a9a" stroke-width="0.5"/>
<path d="M281.2 50.2h11.4v5.2h-11.4z" fill="#e2e2e2" stroke="#9a9a9a" stroke-width="0.5"/>
<!-- 12 move -->
<path d="M302.6 47.9h12.2M308.7 41.8v12.2" stroke="#2a2a2a" stroke-width="1.500"/>
<path d="M306.100 43.700l2.600-3.300 2.600 3.300zM306.100 52.100l2.600 3.300 2.600-3.300zM304.500 45.300l-3.300 2.600 3.300 2.600zM312.900 45.300l3.300 2.600-3.300 2.600z" fill="#2a2a2a"/>
<!-- 13 new component -->
<path d="M327.2 44l1.6-1.8h5.6l-1.4 1.8z" fill="#9ad0f5"/>
<path d="M327.2 44h5.8v5.6h-5.8z" fill="#5fb0ea"/>
<path d="M333 44l1.4-1.800v5.600l-1.400 1.800z" fill="#3d8fd4"/>
<path d="M327.2 49.800h5.800v5.600h-5.800z" fill="#e0e0e0" stroke="#9a9a9a" stroke-width="0.500"/>
<path d="M333.4 49.600l1.400-1.800h5.800l-1.200 1.800z" fill="#f0f0f0" stroke="#9a9a9a" stroke-width="0.4"/>
<path d="M333.400 49.800h6v5.600h-6z" fill="#e0e0e0" stroke="#9a9a9a" stroke-width="0.500"/>
<path d="M339.400 49.800l1.200-1.800v5.400l-1.200 2z" fill="#b8b8b8"/>
<path d="M338.600 39.400l0.900 2.300 2.300-1-1 2.300 2.300 0.900-2.300 0.900 1 2.300-2.300-1-0.900 2.300-0.900-2.300-2.300 1 1-2.300-2.300-0.900 2.300-0.900-1-2.300 2.300 1z" fill="#f9a01b"/>
<circle cx="338.600" cy="43.900" r="2" fill="#fbb533"/>
<!-- 14 joint -->
<path d="M349.200 45.600l4-4.400 1.800 0.800v9l-3.800 4.600-2-0.800z" fill="#dcdcdc" stroke="#777" stroke-width="0.600"/>
<path d="M351.200 46.600l3.800-4.600v9l-3.800 4.600z" fill="#c4c4c4" stroke="#777" stroke-width="0.500"/>
<path d="M358.200 44l2.400-2.400 3.800 4.200v9l-2 0.600-4.200-4.400z" fill="#dcdcdc" stroke="#777" stroke-width="0.600"/>
<path d="M358.200 44l4.200 4.400v7l-4.200-4.400z" fill="#cccccc" stroke="#777" stroke-width="0.500"/>
<path d="M355 47.400l1.200-1v3.400l-1.200 1zM358.200 46.200l-1.200-1.400v3l1.200 1.400z" fill="#4aa3e6"/>
<!-- 15 construct -->
<path d="M376.200 44.400l3.600-4 3.400 0.800-3.600 4z" fill="#f4f4f4" stroke="#8a8a8a" stroke-width="0.500"/>
<path d="M376.200 44.400l3.400 0.800v10.400l-3.400-1z" fill="#e4e4e4" stroke="#8a8a8a" stroke-width="0.500"/>
<path d="M379.600 45.200l3.600-4v10.400l-3.600 4z" fill="#b0b0b0"/>
<path d="M380.800 44.800l4.400-4.600v10.800l-4.400 4.400z" fill="#4fbf73"/>
<path d="M386.800 46.200l4.400-4.800v9.600l-4.400 4.600z" fill="#e09455"/>
<!-- 16 inspect -->
<path d="M406.400 46h12.600" stroke="#555" stroke-width="0.600"/>
<path d="M405.800 44.200v3.600M419.600 44.200v3.600" stroke="#444" stroke-width="0.700"/>
<path d="M406 46l1.800-1v2zM419.400 46l-1.800-1v2z" fill="#444"/>
<rect x="405.800" y="47.600" width="13.800" height="1.800" fill="#fdfdfd"/>
<rect x="405.800" y="49.300" width="13.800" height="2.800" fill="#f39c12"/>
<!-- 17 insert -->
<rect x="434.300" y="40.800" width="14" height="14.200" fill="#6db9f3"/>
<path d="M434.300 51.200l3.200-4.600q1.200-1.400 2.400 0l2.200 3.200 1.400-1.600q1.200-1.200 2.400 0l2.400 2.800v4h-14z" fill="#3a86c8"/>
<path d="M434.300 52.400q3-1.400 5.600 0.400l2.200-1.600q2.600-1.400 6.200 1v2.800h-14z" fill="#2f78ba" opacity="0.6"/>
<circle cx="444.400" cy="44.400" r="1.500" fill="#fbeeb0"/>
<!-- 18 select -->
<rect x="461.200" y="38.700" width="18.800" height="18.400" fill="#0b95e0"/>
<rect x="463.400" y="40.800" width="12.400" height="10" fill="none" stroke="#63d67c" stroke-width="0.800" stroke-dasharray="1.200 1.200"/>
<path d="M473.400 47.600l4.600 4.600h-2l1.400 2.800-1.200 0.600-1.400-2.800-1.400 1.400z" fill="#fff" stroke="#e8f4fc" stroke-width="0.400"/>
</g>

</g>

<g id="bottom">
<rect x="2.4" y="490.3" width="146.2" height="11.9" fill="#f0f0f0" stroke="#dcdcdc" stroke-width="0.5"/>
<text x="13.8" y="498.2" font-size="5" fill="#555" textLength="15.4" lengthAdjust="spacingAndGlyphs">コメント</text>
<circle cx="140.6" cy="496.3" r="2.1" fill="#2a2a2a"/><path d="M139.4 496.3h2.4M140.6 495.1v2.4" stroke="#f0f0f0" stroke-width="0.7"/>
<path d="M145.9 494l1.6 2.3-1.6 2.3z" fill="#bbb" stroke="#999" stroke-width="0.3"/>
<rect x="408.6" y="490.9" width="122.6" height="11.3" fill="#f0f0f0"/>
<g stroke="#444" stroke-width="0.8" fill="none"><ellipse cx="413.5" cy="496.8" rx="3.7" ry="1.4"/><path d="M413.5 492.3v8.6"/></g><circle cx="413.5" cy="496.8" r="1.1" fill="#444"/><path d="M412.2 493.6l1.3-1.7 1.3 1.7zM412.2 499.8l1.3 1.7 1.3-1.7z" fill="#444"/>
<path d="M419.9 495.9h2.6l-1.3 1.6z" fill="#333"/>
<rect x="425.8" y="493.9" width="7.4" height="5.6" rx="0.8" fill="#e2e2e2" stroke="#444" stroke-width="0.8"/><rect x="427.4" y="492.5" width="4.2" height="1.5" fill="#444"/><rect x="427.6" y="495.6" width="3.8" height="2.4" fill="#fafafa" stroke="#666" stroke-width="0.4"/>
<path d="M438.6 496.2l1.1 0.9v-3.4q0.5-0.8 1-0v2.2v-3q0.5-0.8 1.1 0v3v-2.6q0.5-0.8 1.1 0v2.8v-1.8q0.6-0.8 1.1 0v4.2q-0.2 2.2-2.2 2.4h-1.2q-1.2-0.2-2.2-2.2l-1-1.8q0.4-1 1.2-0.7z" fill="#f7f7f7" stroke="#444" stroke-width="0.7" stroke-linejoin="round"/>
<circle cx="454" cy="496" r="2.7" fill="#eef3f7" stroke="#444" stroke-width="0.9"/><path d="M456 498l2.4 2.4" stroke="#444" stroke-width="1.2"/><path d="M458.3 492.6v3M457.3 493.6l1-1 1 1" stroke="#444" stroke-width="0.6" fill="none"/>
<rect x="463.2" y="492.4" width="7" height="7" fill="none" stroke="#999" stroke-width="0.5" stroke-dasharray="1 0.8"/><circle cx="466.8" cy="496" r="2.9" fill="#eef3f7" stroke="#444" stroke-width="0.9"/><path d="M469 498.2l2.6 2.6" stroke="#444" stroke-width="1.3"/>
<path d="M473.9 495.9h2.6l-1.3 1.6z" fill="#333"/>
<rect x="483.6" y="492.8" width="7.4" height="5.8" rx="0.6" fill="#5b9bd5" stroke="#4a6f94" stroke-width="0.6"/><rect x="485.2" y="494.2" width="4.2" height="2.8" fill="#a9cdee"/><path d="M486 498.6v1.6h2.6v-1.6M484.8 500.4h5" stroke="#555" stroke-width="0.7" fill="none"/>
<path d="M493.0 495.9h2.6l-1.3 1.6z" fill="#333"/>
<rect x="498.6" y="492.6" width="8.2" height="8.2" fill="#9a9a9a" stroke="#6a6a6a" stroke-width="0.6"/><path d="M498.6 495.3h8.2M498.6 498h8.2M501.3 492.6v8.2M504 492.6v8.2" stroke="#b5b5b5" stroke-width="0.5"/>
<path d="M508.3 495.9h2.6l-1.3 1.6z" fill="#333"/>
<rect x="513.6" y="492.6" width="8.2" height="8.2" fill="#fff" stroke="#4a6f94" stroke-width="0.6"/><g fill="#4f8fcd"><rect x="514.4" y="493.4" width="3" height="3"/><rect x="518" y="493.4" width="3" height="3"/><rect x="514.4" y="497" width="3" height="3"/><rect x="518" y="497" width="3" height="3"/></g>
<path d="M523.4000000000001 495.9h2.6l-1.3 1.6z" fill="#333"/>
<rect x="0" y="503.9" width="940" height="1.9" fill="#d2d2d2"/>
<rect x="0" y="505.6" width="940" height="21.6" fill="#f0f0f0"/>
<rect x="0" y="527" width="940" height="2" fill="#1f1f1f"/>
<g fill="#3a3a3a">
<rect x="5.1" y="513.8" width="1.3" height="6.8"/><path d="M11.6 513.8v6.8l-5-3.4z"/>
<path d="M22 513.9v6.6l-4.6-3.3z"/><rect x="21.6" y="515.9" width="2.4" height="2.6"/>
<path d="M29.8 513.2v8l5.8-4z"/>
<path d="M42.8 513.9v6.6l4.6-3.3z"/><rect x="40.8" y="515.9" width="2.4" height="2.6"/>
<path d="M54.2 513.8v6.8l5-3.4z"/><rect x="59.3" y="513.8" width="1.3" height="6.8"/>
</g>
<rect x="71.9" y="513.4" width="6" height="6.2" fill="#fcfcfc" stroke="#9a9a9a" stroke-width="0.6"/><g fill="#2f8fe0"><rect x="71.0" y="512.5" width="1.6" height="1.6"/><rect x="77.2" y="512.5" width="1.6" height="1.6"/><rect x="71.0" y="518.9" width="1.6" height="1.6"/></g><path d="M75.6 520.3000000000001l0.5-1.8 2.6-2.6 1.3 1.3-2.6 2.6z" fill="#f5a623"/><path d="M78.1 516.5l0.6-0.6 1.3 1.3-0.6 0.6z" fill="#e8463c"/>
<path d="M82.7 514.2l1.4-1.6h5l-1.2 1.6z" fill="#8ecbf3"/><path d="M82.7 514.2h5.2v5.4h-5.2z" fill="#5aaeea"/><path d="M87.9 514.2l1.2-1.6v5.4l-1.2 1.6z" fill="#3b8ed3"/><path d="M82.7 519.6h5.2l1.2-1.6v1.2l-1.2 1.6h-5.2z" fill="#bdbdbd"/><path d="M90.2 513.0v6.4" stroke="#555" stroke-width="0.7"/>
<rect x="95.4" y="513.4" width="6" height="6.2" fill="#fcfcfc" stroke="#9a9a9a" stroke-width="0.6"/><g fill="#2f8fe0"><rect x="94.5" y="512.5" width="1.6" height="1.6"/><rect x="100.7" y="512.5" width="1.6" height="1.6"/><rect x="94.5" y="518.9" width="1.6" height="1.6"/></g><path d="M99.1 520.3000000000001l0.5-1.8 2.6-2.6 1.3 1.3-2.6 2.6z" fill="#f5a623"/><path d="M101.6 516.5l0.6-0.6 1.3 1.3-0.6 0.6z" fill="#e8463c"/>
<path d="M106.2 514.2l1.4-1.6h5l-1.2 1.6z" fill="#8ecbf3"/><path d="M106.2 514.2h5.2v5.4h-5.2z" fill="#5aaeea"/><path d="M111.4 514.2l1.2-1.6v5.4l-1.2 1.6z" fill="#3b8ed3"/><path d="M106.2 519.6h5.2l1.2-1.6v1.2l-1.2 1.6h-5.2z" fill="#bdbdbd"/><path d="M113.8 513.0v6.4" stroke="#555" stroke-width="0.7"/>
<rect x="118.9" y="513.4" width="6" height="6.2" fill="#fcfcfc" stroke="#9a9a9a" stroke-width="0.6"/><g fill="#2f8fe0"><rect x="118.0" y="512.5" width="1.6" height="1.6"/><rect x="124.2" y="512.5" width="1.6" height="1.6"/><rect x="118.0" y="518.9" width="1.6" height="1.6"/></g><path d="M122.6 520.3000000000001l0.5-1.8 2.6-2.6 1.3 1.3-2.6 2.6z" fill="#f5a623"/><path d="M125.1 516.5l0.6-0.6 1.3 1.3-0.6 0.6z" fill="#e8463c"/>
<path d="M129.7 514.2l1.4-1.6h5l-1.2 1.6z" fill="#8ecbf3"/><path d="M129.7 514.2h5.2v5.4h-5.2z" fill="#5aaeea"/><path d="M134.8 514.2l1.2-1.6v5.4l-1.2 1.6z" fill="#3b8ed3"/><path d="M129.7 519.6h5.2l1.2-1.6v1.2l-1.2 1.6h-5.2z" fill="#bdbdbd"/><path d="M137.2 513.0v6.4" stroke="#555" stroke-width="0.7"/>
<path d="M141.4 514.2l1.4-1.6h5l-1.2 1.6z" fill="#8ecbf3"/><path d="M141.4 514.2h5.2v5.4h-5.2z" fill="#5aaeea"/><path d="M146.6 514.2l1.2-1.6v5.4l-1.2 1.6z" fill="#3b8ed3"/><path d="M141.4 519.6h5.2l1.2-1.6v1.2l-1.2 1.6h-5.2z" fill="#bdbdbd"/><path d="M149.0 513.0v6.4" stroke="#555" stroke-width="0.7"/>
<path d="M153.2 514.2l1.4-1.6h5l-1.2 1.6z" fill="#8ecbf3"/><path d="M153.2 514.2h5.2v5.4h-5.2z" fill="#5aaeea"/><path d="M158.3 514.2l1.2-1.6v5.4l-1.2 1.6z" fill="#3b8ed3"/><path d="M153.2 519.6h5.2l1.2-1.6v1.2l-1.2 1.6h-5.2z" fill="#bdbdbd"/><path d="M160.8 513.0v6.4" stroke="#555" stroke-width="0.7"/>
<path d="M165.3 516.6h7.2M168.9 513.0v7.2" stroke="#333" stroke-width="0.9"/><path d="M167.6 513.9l1.3-1.5 1.3 1.5zM167.6 519.3000000000001l1.3 1.5 1.3-1.5zM166.2 515.3000000000001l-1.5 1.3 1.5 1.3zM171.6 515.3000000000001l1.5 1.3-1.5 1.3z" fill="#333"/>
<path d="M177.1 516.6h7.2M180.7 513.0v7.2" stroke="#333" stroke-width="0.9"/><path d="M179.3 513.9l1.3-1.5 1.3 1.5zM179.3 519.3000000000001l1.3 1.5 1.3-1.5zM178.0 515.3000000000001l-1.5 1.3 1.5 1.3zM183.3 515.3000000000001l1.5 1.3-1.5 1.3z" fill="#333"/>
<path d="M188.8 516.6h7.2M192.4 513.0v7.2" stroke="#333" stroke-width="0.9"/><path d="M191.1 513.9l1.3-1.5 1.3 1.5zM191.1 519.3000000000001l1.3 1.5 1.3-1.5zM189.7 515.3000000000001l-1.5 1.3 1.5 1.3zM195.1 515.3000000000001l1.5 1.3-1.5 1.3z" fill="#333"/>
<rect x="201.2" y="513.4" width="6" height="6.2" fill="#fcfcfc" stroke="#9a9a9a" stroke-width="0.6"/><g fill="#2f8fe0"><rect x="200.2" y="512.5" width="1.6" height="1.6"/><rect x="206.4" y="512.5" width="1.6" height="1.6"/><rect x="200.2" y="518.9" width="1.6" height="1.6"/></g><path d="M204.8 520.3000000000001l0.5-1.8 2.6-2.6 1.3 1.3-2.6 2.6z" fill="#f5a623"/><path d="M207.3 516.5l0.6-0.6 1.3 1.3-0.6 0.6z" fill="#e8463c"/>
<path d="M211.9 514.2l1.4-1.6h5l-1.2 1.6z" fill="#8ecbf3"/><path d="M211.9 514.2h5.2v5.4h-5.2z" fill="#5aaeea"/><path d="M217.1 514.2l1.2-1.6v5.4l-1.2 1.6z" fill="#3b8ed3"/><path d="M211.9 519.6h5.2l1.2-1.6v1.2l-1.2 1.6h-5.2z" fill="#bdbdbd"/><path d="M219.5 513.0v6.4" stroke="#555" stroke-width="0.7"/>
<rect x="224.7" y="513.4" width="6" height="6.2" fill="#fcfcfc" stroke="#9a9a9a" stroke-width="0.6"/><g fill="#2f8fe0"><rect x="223.8" y="512.5" width="1.6" height="1.6"/><rect x="229.9" y="512.5" width="1.6" height="1.6"/><rect x="223.8" y="518.9" width="1.6" height="1.6"/></g><path d="M228.3 520.3000000000001l0.5-1.8 2.6-2.6 1.3 1.3-2.6 2.6z" fill="#f5a623"/><path d="M230.8 516.5l0.6-0.6 1.3 1.3-0.6 0.6z" fill="#e8463c"/>
<path d="M235.4 514.2l1.4-1.6h5l-1.2 1.6z" fill="#8ecbf3"/><path d="M235.4 514.2h5.2v5.4h-5.2z" fill="#5aaeea"/><path d="M240.6 514.2l1.2-1.6v5.4l-1.2 1.6z" fill="#3b8ed3"/><path d="M235.4 519.6h5.2l1.2-1.6v1.2l-1.2 1.6h-5.2z" fill="#bdbdbd"/><path d="M243.0 513.0v6.4" stroke="#555" stroke-width="0.7"/>
<rect x="248.2" y="513.4" width="6" height="6.2" fill="#fcfcfc" stroke="#9a9a9a" stroke-width="0.6"/><g fill="#2f8fe0"><rect x="247.2" y="512.5" width="1.6" height="1.6"/><rect x="253.4" y="512.5" width="1.6" height="1.6"/><rect x="247.2" y="518.9" width="1.6" height="1.6"/></g><path d="M251.8 520.3000000000001l0.5-1.8 2.6-2.6 1.3 1.3-2.6 2.6z" fill="#f5a623"/><path d="M254.3 516.5l0.6-0.6 1.3 1.3-0.6 0.6z" fill="#e8463c"/>
<path d="M258.9 514.2l1.4-1.6h5l-1.2 1.6z" fill="#8ecbf3"/><path d="M258.9 514.2h5.2v5.4h-5.2z" fill="#5aaeea"/><path d="M264.1 514.2l1.2-1.6v5.4l-1.2 1.6z" fill="#3b8ed3"/><path d="M258.9 519.6h5.2l1.2-1.6v1.2l-1.2 1.6h-5.2z" fill="#bdbdbd"/><path d="M266.5 513.0v6.4" stroke="#555" stroke-width="0.7"/>
<path d="M270.6 514.2l1.4-1.6h5l-1.2 1.6z" fill="#8ecbf3"/><path d="M270.6 514.2h5.2v5.4h-5.2z" fill="#5aaeea"/><path d="M275.8 514.2l1.2-1.6v5.4l-1.2 1.6z" fill="#3b8ed3"/><path d="M270.6 519.6h5.2l1.2-1.6v1.2l-1.2 1.6h-5.2z" fill="#bdbdbd"/><path d="M278.2 513.0v6.4" stroke="#555" stroke-width="0.7"/>
<rect x="283.4" y="513.4" width="6" height="6.2" fill="#fcfcfc" stroke="#9a9a9a" stroke-width="0.6"/><g fill="#2f8fe0"><rect x="282.5" y="512.5" width="1.6" height="1.6"/><rect x="288.7" y="512.5" width="1.6" height="1.6"/><rect x="282.5" y="518.9" width="1.6" height="1.6"/></g><path d="M287.1 520.3000000000001l0.5-1.8 2.6-2.6 1.3 1.3-2.6 2.6z" fill="#f5a623"/><path d="M289.6 516.5l0.6-0.6 1.3 1.3-0.6 0.6z" fill="#e8463c"/>
<path d="M294.1 514.2l1.4-1.6h5l-1.2 1.6z" fill="#8ecbf3"/><path d="M294.1 514.2h5.2v5.4h-5.2z" fill="#5aaeea"/><path d="M299.3 514.2l1.2-1.6v5.4l-1.2 1.6z" fill="#3b8ed3"/><path d="M294.1 519.6h5.2l1.2-1.6v1.2l-1.2 1.6h-5.2z" fill="#bdbdbd"/><path d="M301.8 513.0v6.4" stroke="#555" stroke-width="0.7"/>
<path d="M305.9 514.2l1.4-1.6h5l-1.2 1.6z" fill="#8ecbf3"/><path d="M305.9 514.2h5.2v5.4h-5.2z" fill="#5aaeea"/><path d="M311.1 514.2l1.2-1.6v5.4l-1.2 1.6z" fill="#3b8ed3"/><path d="M305.9 519.6h5.2l1.2-1.6v1.2l-1.2 1.6h-5.2z" fill="#bdbdbd"/><path d="M313.5 513.0v6.4" stroke="#555" stroke-width="0.7"/>
<path d="M75 523.6H310M74.9 521.8v1.8M86.7 521.8v1.8M98.4 521.8v1.8M110.2 521.8v1.8M121.9 521.8v1.8M133.7 521.8v1.8M145.4 521.8v1.8M157.2 521.8v1.8M168.9 521.8v1.8M180.7 521.8v1.8M192.4 521.8v1.8M204.2 521.8v1.8M215.9 521.8v1.8M227.7 521.8v1.8M239.4 521.8v1.8M251.2 521.8v1.8M262.9 521.8v1.8M274.6 521.8v1.8M286.4 521.8v1.8M298.1 521.8v1.8M309.9 521.8v1.8" stroke="#bdbdbd" stroke-width="0.7" fill="none"/>
<path d="M313 510.2h6.4l-2.6 3.6h-1.2z" fill="#3a3a3a"/><rect x="315.5" y="511" width="1.4" height="14.4" fill="#3a3a3a"/>
<path d="M931.65 517.77L933.13 518.38M930.57 518.85L931.18 520.33M929.03 518.85L928.42 520.33M927.95 517.77L926.47 518.38M927.95 516.23L926.47 515.62M929.03 515.15L928.42 513.67M930.57 515.15L931.18 513.67M931.65 516.23L933.13 515.62" stroke="#666" stroke-width="1.3"/><circle cx="929.8" cy="517" r="2.2" fill="none" stroke="#666" stroke-width="1.2"/>
</g>
</svg>
</body></html>
